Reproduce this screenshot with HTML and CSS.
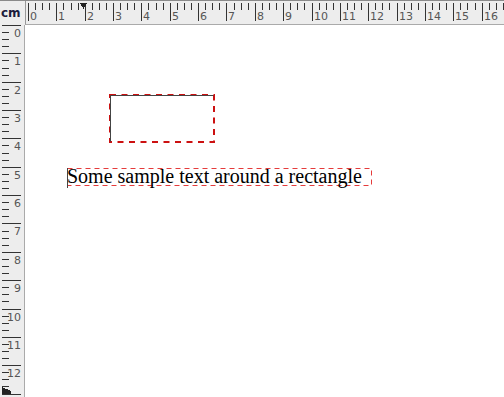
FILE: index.html
```html
<!DOCTYPE html>
<html lang="en">
<head>
    <meta charset="UTF-8">
    <title>Ruler canvas</title>
    <link rel="stylesheet" href="styles.css">
</head>
<body>
    <div class="app">
        <div class="corner">cm</div>
        <div class="hruler">
            <svg id="hruler" width="479" height="25"></svg>
        </div>
        <div class="vruler">
            <svg id="vruler" width="25" height="372"></svg>
        </div>
        <div class="canvas">
            <svg class="shapes" width="479" height="372">
                <!-- selection frame with the rectangle outline above it -->
                <rect x="85" y="70" width="104" height="47" class="sel-rect"/>
                <path d="M85.5 116.5 V70.5 H188.5" class="outline"/>
                <!-- text frame -->
                <rect x="42.5" y="143.5" width="304" height="17" class="sel-text"/>
                <line x1="42.5" y1="143" x2="42.5" y2="163" class="outline"/>
            </svg>
            <div class="sample-text">Some sample text around a rectangle</div>
        </div>
    </div>

    <script>
        const NS = 'http://www.w3.org/2000/svg';
        const CM = 28.35;

        function add(svg, tag, attrs, text) {
            const el = document.createElementNS(NS, tag);
            for (const k in attrs) el.setAttribute(k, attrs[k]);
            if (text !== undefined) el.textContent = text;
            svg.appendChild(el);
        }

        // horizontal ruler
        const h = document.getElementById('hruler');
        for (let i = 0; i <= 16; i++) {
            const x = Math.round(2 + CM * i) + 0.5;
            add(h, 'line', { x1: x, y1: 3, x2: x, y2: 21, class: 'tick' });
            add(h, 'text', { x: x + 1.5, y: 20, class: 'label' }, i);
            for (let k = 1; k < 4; k++) {
                const mx = Math.round(2 + CM * (i + k / 4)) + 0.5;
                add(h, 'line', { x1: mx, y1: 3, x2: mx, y2: 10, class: 'tick' });
            }
        }
        add(h, 'polygon', { points: '54,3 61,3 57.5,9', class: 'marker' });

        // vertical ruler
        const v = document.getElementById('vruler');
        for (let i = 0; i <= 13; i++) {
            const y = Math.round(CM * i) + 0.5;
            add(v, 'line', { x1: 2, y1: y, x2: 21, y2: y, class: 'tick' });
            if (i < 13) {
                add(v, 'text', { x: 21, y: y + 11.5, class: 'label', 'text-anchor': 'end' }, i);
            }
            for (let k = 1; k < 4; k++) {
                const my = Math.round(CM * (i + k / 4)) + 0.5;
                add(v, 'line', { x1: 2, y1: my, x2: 9, y2: my, class: 'tick' });
            }
        }
        add(v, 'polygon', { points: '2,362 11,366 11,369 2,369', class: 'marker' });
    </script>
</body>
</html>
```

FILE: styles.css
```css
body {
    margin: 0;
    padding: 0;
    background-color: #fff;
    font-family: "DejaVu Sans", sans-serif;
}
.app {
    display: grid;
    grid-template-columns: 25px 479px;
    grid-template-rows: 25px 372px;
    width: 504px;
    height: 397px;
    overflow: hidden;
}
.corner {
    background-color: #ededed;
    border-top: 1px solid #8a8a8a;
    box-sizing: border-box;
    font-size: 12px;
    font-weight: bold;
    color: #1c1c3c;
    padding: 5px 0 0 1px;
}
.hruler {
    background-color: #ededed;
    border-top: 1px solid #8a8a8a;
    box-sizing: border-box;
    height: 25px;
    overflow: hidden;
}
.hruler svg {
    display: block;
    margin-top: -1px;
}
.vruler {
    background-color: #ededed;
    overflow: hidden;
}
.vruler svg, .shapes {
    display: block;
}
.hruler svg, .vruler svg {
    shape-rendering: crispEdges;
}
.tick {
    stroke: #333;
    stroke-width: 1;
}
.label {
    font-family: "DejaVu Sans", sans-serif;
    font-size: 11px;
    fill: #555;
}
.marker {
    fill: #222;
}
#hruler {
    border-left: 1px solid #999;
    border-bottom: 1px solid #aaa;
    box-sizing: border-box;
}
#vruler {
    border-right: 1px solid #aaa;
    box-sizing: border-box;
}
.canvas {
    position: relative;
    background-color: #fff;
}
.shapes {
    position: absolute;
    left: 0;
    top: 0;
}
.outline {
    fill: none;
    stroke: #444;
    stroke-width: 1;
}
.sel-rect {
    fill: none;
    stroke: #cc1111;
    stroke-width: 2;
    stroke-dasharray: 6 5.5;
}
.sel-text {
    fill: none;
    stroke: #e53b3b;
    stroke-width: 1;
    stroke-dasharray: 5 4;
}
.sample-text {
    position: absolute;
    left: 42px;
    top: 143px;
    font-family: "Liberation Serif", serif;
    font-size: 20px;
    line-height: 17px;
    color: #000;
    white-space: nowrap;
}
```
